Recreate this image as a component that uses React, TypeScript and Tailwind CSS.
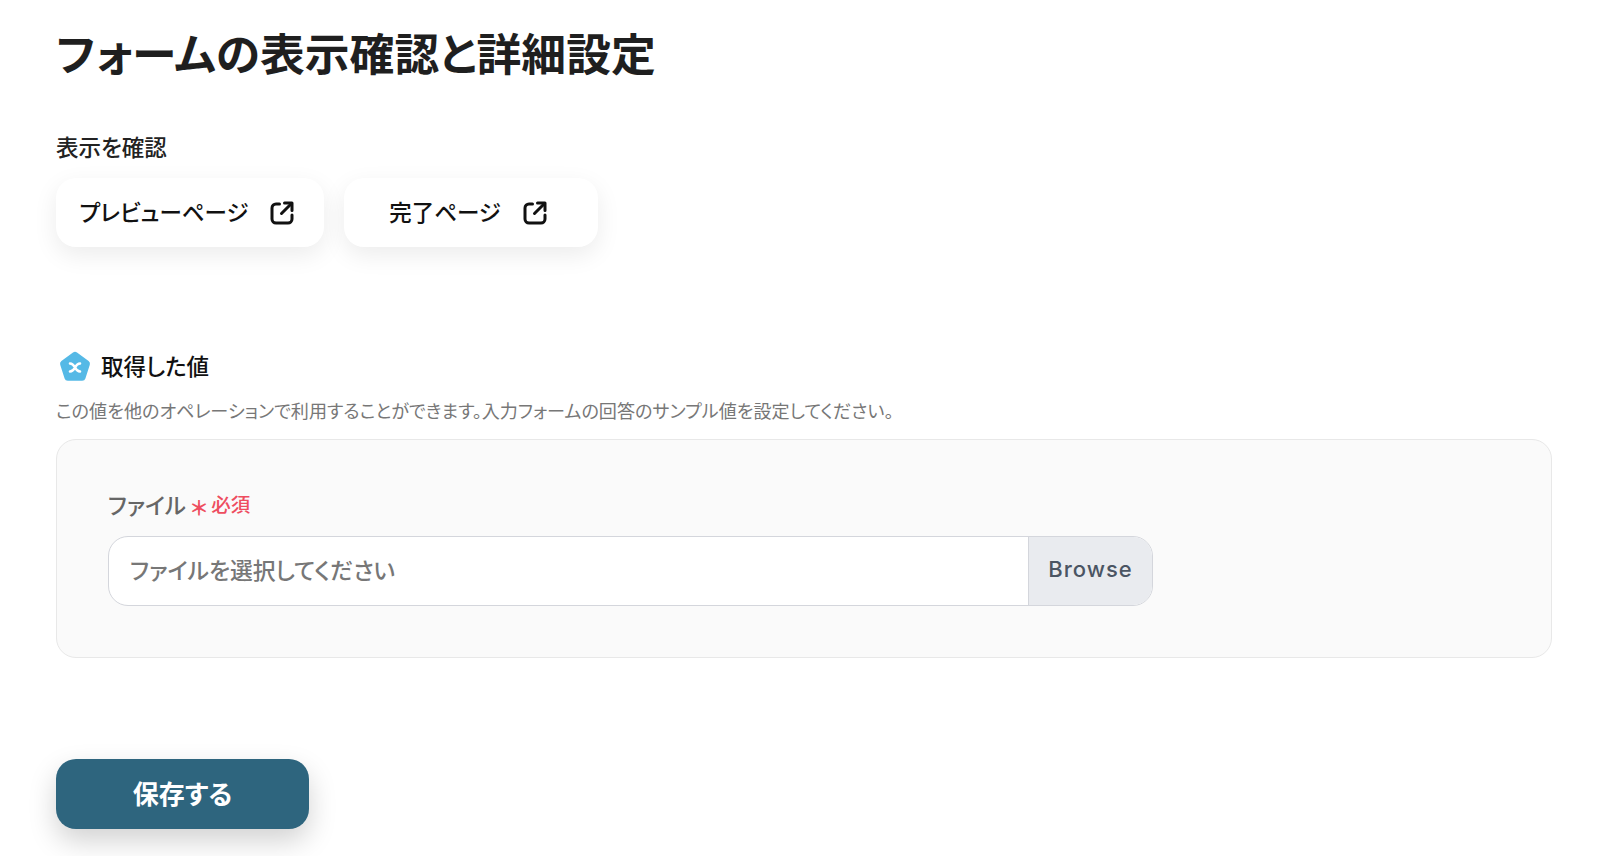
function LinkButton({ label, className }: { label: string; className: string }) {
    return (
        <button className={`flex items-center justify-center h-[69px] pr-[6px] bg-white rounded-[20px] shadow-[0_8px_24px_rgba(0,0,0,0.08)] text-[22.500px] font-medium text-[#111] ${className}`}>
            <span>{label}</span>
            <svg width="24" height="24" viewBox="0 0 24 24" fill="none" stroke="#111" strokeWidth="3" strokeLinecap="round" strokeLinejoin="round">
                <path d="M9.500 3H6a4 4 0 0 0-4 4v11a4 4 0 0 0 4 4h12a4 4 0 0 0 4-4v-4" />
                <path d="M14.500 2H22v7.500" />
                <path d="M21.500 2.500 11.500 12.500" />
            </svg>
        </button>
    );
}

export default function App() {
    return (
        <div className="w-[1600px] h-[856px] overflow-hidden bg-white pl-[56px] pr-[48px] font-['Inter','Noto_Sans_CJK_JP',sans-serif] [font-feature-settings:'palt'] text-[#1a1a1a]">
            <h1 className="pt-[27px] text-[44.800px] leading-[56px] font-semibold text-[#1f1f1f]">フォームの表示確認と詳細設定</h1>

            <section className="mt-[49px]">
                <h2 className="text-[22.500px] leading-[32px] font-medium text-[#222]">表示を確認</h2>
                <div className="mt-[14px] flex gap-[20px]">
                    <LinkButton label="プレビューページ" className="w-[268px] gap-[22px]" />
                    <LinkButton label="完了ページ" className="w-[254px] gap-[22px]" />
                </div>
            </section>

            <section className="mt-[104px]">
                <div className="flex items-center gap-[10px] pl-[3px]">
                    <svg width="32" height="32" viewBox="0 0 32 32">
                        <path d="M14 1.600a3.400 3.400 0 0 1 4 0l11.600 8.400a3.400 3.400 0 0 1 1.200 3.800l-4.400 13.600a3.400 3.400 0 0 1-3.200 2.400H8.800a3.400 3.400 0 0 1-3.200-2.400L1.200 13.800a3.400 3.400 0 0 1 1.200-3.800z" fill="#55b9e6" />
                        <path d="M11 12.500c2.500 0 3.500 1.200 5 4s2.500 4 5 4M21 12.500c-2.500 0-3.500 1.200-5 4s-2.500 4-5 4" stroke="#fff" strokeWidth="2.600" fill="none" strokeLinecap="round" />
                    </svg>
                    <h2 className="text-[22.500px] leading-[32px] font-medium text-[#111]">取得した値</h2>
                </div>
                <p className="mt-[16px] text-[18.100px] leading-[24px] text-[#777]">この値を他のオペレーションで利用することができます。入力フォームの回答のサンプル値を設定してください。</p>

                <div className="mt-[16px] h-[219px] rounded-[20px] border border-[#e8e8e8] bg-[#fafafa] pl-[51px] pt-[50px]">
                    <div className="flex items-center h-[32px]">
                        <span className="text-[22.500px] font-medium text-[#666]">ファイル</span>
                        <span className="ml-[5px] text-[20px] font-bold leading-none text-[#ee4d5f] translate-y-[3px]">＊</span>
                        <span className="ml-[4px] text-[19.500px] font-medium text-[#ee4d5f]">必須</span>
                    </div>
                    <div className="mt-[14px] flex w-[1045px] h-[70px] rounded-[20px] border border-[#d4d6dc] bg-white overflow-hidden">
                        <div className="flex-1 flex items-center pl-[21px] text-[22.800px] font-medium text-[#777]">ファイルを選択してください</div>
                        <div className="w-[124px] flex items-center justify-center pb-[3px] border-l border-[#d4d6dc] bg-[#e9ebef] text-[22px] font-medium tracking-[1px] text-[#4b5563]">Browse</div>
                    </div>
                </div>
            </section>

            <button className="mt-[101px] w-[253px] h-[70px] rounded-[20px] bg-[#2e657e] text-white text-[26px] font-semibold shadow-[0_12px_28px_rgba(0,0,0,0.18)]">保存する</button>
        </div>
    );
}
